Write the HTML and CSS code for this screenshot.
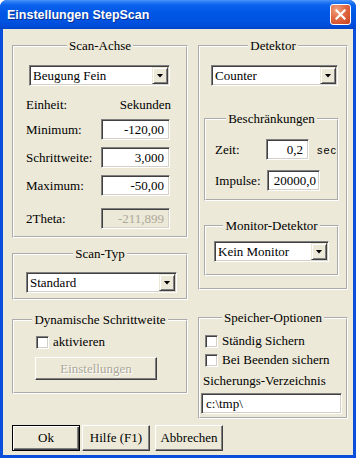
FILE: index.html
```html
<!DOCTYPE html>
<html lang="de">
<head>
<meta charset="utf-8">
<title>Einstellungen StepScan</title>
<meta name="viewport" content="width=device-width,initial-scale=1">
<link rel="stylesheet" href="styles.css">
</head>
<body>
<div class="window">
  <div class="titlebar">
    <span class="title">Einstellungen StepScan</span>
    <span class="close" aria-label="Schließen">
      <svg width="11" height="11" viewBox="0 0 11 11"><path d="M1.5 1.5L9.5 9.5M9.5 1.5L1.5 9.5" stroke="#fff" stroke-width="2.2" stroke-linecap="square"/></svg>
    </span>
  </div>

  <div class="client">
    <div class="columns">
      <!-- left column -->
      <div class="col">
        <fieldset class="group achse">
          <legend>Scan-Achse</legend>
          <div class="combo combo-achse"><span class="combo-text">Beugung Fein</span><span class="combo-btn"></span></div>
          <div class="unit-row"><span>Einheit:</span><span>Sekunden</span></div>
          <div class="field-row"><label for="f-min">Minimum:</label><input class="edit" id="f-min" value="-120,00"></div>
          <div class="field-row"><label for="f-step">Schrittweite:</label><input class="edit" id="f-step" value="3,000"></div>
          <div class="field-row"><label for="f-max">Maximum:</label><input class="edit" id="f-max" value="-50,00"></div>
          <div class="field-row theta"><label for="f-theta">2Theta:</label><input class="edit" id="f-theta" value="-211,899" disabled></div>
        </fieldset>

        <fieldset class="group scantyp">
          <legend>Scan-Typ</legend>
          <div class="combo combo-typ"><span class="combo-text">Standard</span><span class="combo-btn"></span></div>
        </fieldset>

        <fieldset class="group dynamisch">
          <legend>Dynamische Schrittweite</legend>
          <div class="check-row dyn-check"><span class="check"></span><span>aktivieren</span></div>
          <button class="btn btn-dyn" disabled>Einstellungen</button>
        </fieldset>
      </div>

      <!-- right column -->
      <div class="col">
        <fieldset class="group detektor">
          <legend>Detektor</legend>
          <div class="combo combo-det"><span class="combo-text">Counter</span><span class="combo-btn"></span></div>

          <fieldset class="group inner limits">
            <legend>Beschränkungen</legend>
            <div class="field-row zeit"><label for="f-zeit">Zeit:</label><input class="edit" id="f-zeit" value="0,2"><span class="unit">sec</span></div>
            <div class="field-row impulse"><label for="f-imp">Impulse:</label><input class="edit" id="f-imp" value="20000,0"></div>
          </fieldset>

          <fieldset class="group inner monitor">
            <legend>Monitor-Detektor</legend>
            <div class="combo combo-mon"><span class="combo-text">Kein Monitor</span><span class="combo-btn"></span></div>
          </fieldset>
        </fieldset>

        <fieldset class="group speicher">
          <legend>Speicher-Optionen</legend>
          <div class="check-row save-1"><span class="check"></span><span>Ständig Sichern</span></div>
          <div class="check-row save-2"><span class="check"></span><span>Bei Beenden sichern</span></div>
          <div class="dir-label">Sicherungs-Verzeichnis</div>
          <input class="edit dir-edit" value="c:\tmp\">
        </fieldset>
      </div>
    </div>

    <div class="actions">
      <button class="btn default">Ok</button>
      <button class="btn btn-help">Hilfe (F1)</button>
      <button class="btn btn-cancel">Abbrechen</button>
    </div>
  </div>
</div>
</body>
</html>
```

FILE: styles.css
```css
*{box-sizing:border-box}
html,body{margin:0;padding:0;background:#fff}
body{font:13px/16px "Liberation Serif","Times New Roman",serif;color:#000}

/* window frame */
.window{width:356px;height:458px;display:flex;flex-direction:column;background:#0a4fdc;border-radius:7px 7px 0 0;overflow:hidden}
.titlebar{
  height:29px;flex:none;display:flex;align-items:center;justify-content:space-between;
  padding:0 5px 0 7px;
  background:linear-gradient(#4a96f8 0,#2a7cf4 2px,#0a62ee 5px,#0058e6 12px,#0054e2 20px,#004cd8 26px,#0043c8 29px);
}
.title{font:bold 12.5px/16px "Liberation Sans",Arial,sans-serif;color:#fff;text-shadow:1px 1px 0 #0b2f8f}
.close{
  width:21px;height:21px;display:flex;align-items:center;justify-content:center;
  border:1px solid #fff;border-radius:3px;
  background:radial-gradient(circle at 30% 25%,#f0a080 0,#e26a44 45%,#c8401f 100%);
}
.client{flex:1;margin:0 3px 3px;background:#ece9d8;padding:9px 0 0 9px}

.columns{display:grid;grid-template-columns:176px 150px;column-gap:10px;align-items:start}
.col{display:flex;flex-direction:column}

/* group boxes */
.group{margin:0;padding:0;min-width:0;border:2px groove #fff}
.group legend{margin:0 auto;padding:0 2px;line-height:16px}
.achse{height:200px}
.scantyp{height:54px;margin-top:8px}
.dynamisch{height:82px;margin-top:12px}
.detektor{height:252px}
.speicher{height:109px;margin-top:20px}
.inner{width:135px;margin-left:4px}
.limits{height:90px;margin-top:25px}
.monitor{height:58px;margin-top:17px}

/* edits */
.edit{
  height:21px;margin:0;padding:0 5px;
  font:13px "Liberation Serif","Times New Roman",serif;color:#000;text-align:right;
  background:#fff;outline:none;
  border:1px solid;border-color:#808080 #fff #fff #808080;
  box-shadow:inset 1px 1px 0 #404040,inset -1px -1px 0 #d4d0c8;
}
.edit:disabled{background:#ece9d8;color:#aca899}

/* combo boxes */
.combo{
  height:21px;display:flex;padding:1px;background:#fff;
  border:1px solid;border-color:#808080 #fff #fff #808080;
  box-shadow:inset 1px 1px 0 #404040,inset -1px -1px 0 #d4d0c8;
}
.combo-text{flex:1;padding-left:2px;line-height:17px;white-space:nowrap}
.combo-btn{
  width:16px;display:flex;align-items:center;justify-content:center;background:#ece9d8;
  border:1px solid;border-color:#ece9d8 #404040 #404040 #ece9d8;
  box-shadow:inset 1px 1px 0 #fff,inset -1px -1px 0 #808080;
}
.combo-btn::after{content:"";width:7px;height:4px;background:#000;clip-path:polygon(0 0,100% 0,50% 100%)}
.combo-achse{width:141px;margin:11px 0 0 15px}
.combo-typ{width:151px;margin:10px 0 0 12px}
.combo-det{width:127px;margin:11px 0 0 11px}
.combo-mon{width:115px;margin:7px 0 0 8px}

/* scan axis rows */
.unit-row{display:flex;justify-content:space-between;margin-top:11px;padding:0 15px 0 12px}
.field-row{display:flex;align-items:center;margin-top:7px}
.field-row label{width:75px;margin-left:12px}
.achse .field-row .edit{width:69px}
.unit-row + .field-row{margin-top:6px}
.field-row.theta{margin-top:12px}

.limits .field-row label{width:52px;margin-left:9px}
.zeit{margin-top:12px}
.zeit .edit{width:43px}
.impulse{margin-top:10px}
.impulse .edit{width:53px;padding-right:3px}
.unit{margin-left:8px;font:11px "Liberation Sans",Arial,sans-serif;letter-spacing:1px}

/* checkboxes */
.check-row{display:flex;align-items:center;gap:4px}
.check{
  width:13px;height:13px;flex:none;background:#fff;
  border:1px solid;border-color:#808080 #fff #fff #808080;
  box-shadow:inset 1px 1px 0 #404040,inset -1px -1px 0 #d4d0c8;
}
.dyn-check{margin:6px 0 0 22px}
.save-1{margin:7px 0 0 5px}
.save-2{margin:3px 0 0 5px}
.dir-label{margin:5px 0 0 3px}
.dir-edit{display:block;width:141px;margin:4px 0 0 1px;text-align:left;padding:0 4px}

/* buttons */
.btn{
  height:26px;width:68px;padding:0;margin:0;
  font:13px "Liberation Serif","Times New Roman",serif;color:#000;background:#ece9d8;
  border:1px solid;border-color:#fff #404040 #404040 #fff;
  box-shadow:inset -1px -1px 0 #808080;
}
.btn.default{border-color:#000;box-shadow:inset 1px 1px 0 #fff,inset -1px -1px 0 #404040,inset -2px -2px 0 #808080}
.btn:disabled{color:#aca899;text-shadow:1px 1px 0 #fff}
.btn-dyn{display:block;width:122px;height:23px;margin:7px 0 0 21px}
.actions{display:flex;margin-top:6px}
.btn-help{margin-left:2px}
.btn-cancel{margin-left:5px}
```
